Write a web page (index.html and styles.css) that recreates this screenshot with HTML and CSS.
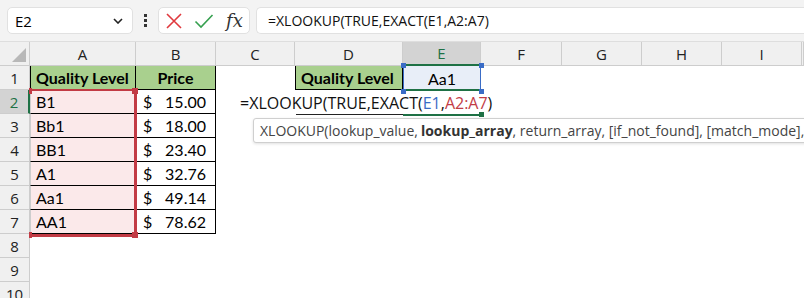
FILE: index.html
```html
<!DOCTYPE html>
<html lang="en">
<head>
  <meta charset="UTF-8" />
  <title>XLOOKUP EXACT</title>
  <link rel="stylesheet" href="styles.css">
</head>
<body>

  <div class="toolbar">
    <div class="name-box">
      <span>E2</span>
      <svg width="10" height="6" viewBox="0 0 10 6"><path d="M1 1l4 4 4-4" fill="none" stroke="#222" stroke-width="1.6"/></svg>
    </div>
    <div class="dots"><i></i><i></i><i></i></div>
    <div class="fx-box">
      <svg width="18" height="18" viewBox="0 0 18 18"><path d="M2 2l14 14M16 2L2 16" stroke="#e0393e" stroke-width="1.6"/></svg>
      <svg width="20" height="18" viewBox="0 0 20 18"><path d="M1.5 9.5l5.5 5.5L18.5 3" fill="none" stroke="#36a04f" stroke-width="1.6"/></svg>
      <span class="fx">fx</span>
    </div>
    <div class="formula">=XLOOKUP(TRUE,EXACT(E1,A2:A7)</div>
  </div>

  <div class="sheet">
    <div class="row head">
      <div class="corner"><svg width="14" height="14" viewBox="0 0 14 14"><path d="M14 0v14H0z" fill="#b8b8b8"/></svg></div>
      <div>A</div><div>B</div><div>C</div><div>D</div><div class="active">E</div><div>F</div><div>G</div><div>H</div><div>I</div><div></div>
    </div>
    <div class="row">
      <div class="num">1</div>
      <div class="cell hdr bl">Quality Level</div>
      <div class="cell hdr center">Price</div>
      <div></div>
      <div class="cell hdr bl">Quality Level</div>
      <div class="cell center ref">Aa1</div>
      <div></div><div></div><div></div><div></div><div></div>
    </div>
    <div class="row">
      <div class="num active">2</div>
      <div class="cell pink bl">B1</div>
      <div class="cell money"><span>$</span><span>15.00</span></div>
      <div></div><div></div><div></div><div></div><div></div><div></div><div></div><div></div>
    </div>
    <div class="row">
      <div class="num">3</div>
      <div class="cell pink bl">Bb1</div>
      <div class="cell money"><span>$</span><span>18.00</span></div>
      <div></div><div></div><div></div><div></div><div></div><div></div><div></div><div></div>
    </div>
    <div class="row">
      <div class="num">4</div>
      <div class="cell pink bl">BB1</div>
      <div class="cell money"><span>$</span><span>23.40</span></div>
      <div></div><div></div><div></div><div></div><div></div><div></div><div></div><div></div>
    </div>
    <div class="row">
      <div class="num">5</div>
      <div class="cell pink bl">A1</div>
      <div class="cell money"><span>$</span><span>32.76</span></div>
      <div></div><div></div><div></div><div></div><div></div><div></div><div></div><div></div>
    </div>
    <div class="row">
      <div class="num">6</div>
      <div class="cell pink bl">Aa1</div>
      <div class="cell money"><span>$</span><span>49.14</span></div>
      <div></div><div></div><div></div><div></div><div></div><div></div><div></div><div></div>
    </div>
    <div class="row">
      <div class="num">7</div>
      <div class="cell pink bl">AA1</div>
      <div class="cell money"><span>$</span><span>78.62</span></div>
      <div></div><div></div><div></div><div></div><div></div><div></div><div></div><div></div>
    </div>
    <div class="row"><div class="num">8</div></div>
    <div class="row"><div class="num">9</div></div>
    <div class="row short"><div class="num">10</div></div>

    <!-- reference highlights and edit overlay -->
    <div class="range-red"><i class="h tl"></i><i class="h tr"></i><i class="h bl2"></i><i class="h br"></i></div>
    <div class="range-blue"><i class="h tl"></i><i class="h tr"></i><i class="h bl2"></i><i class="h br"></i></div>
    <div class="active-top"></div>
    <div class="edit">=XLOOKUP(TRUE,EXACT(<span class="c-blue">E1</span>,<span class="c-red">A2:A7</span>)</div>
    <div class="edit-line"></div>
    <div class="active-bottom"><i></i></div>
    <div class="tip">XLOOKUP(lookup_value, <b>lookup_array</b>, return_array, [if_not_found], [match_mode],</div>
  </div>

</body>
</html>
```

FILE: styles.css
```css
:root {
  --bar: #f3f3f3;
  --head: #f0f0f0;
  --line: #cdcdcd;
  --green: #1e7145;
  --fill: #a9d08e;
  --pink: #fbe9ea;
  --red: #c23b45;
  --blue: #3a6cc6;
}

body {
  margin: 0;
  width: 804px;
  height: 300px;
  overflow: hidden;
  background: #fff;
  font-family: 'Liberation Sans', Arial, sans-serif;
  color: #000;
}

.toolbar {
  background: var(--bar);
  height: 42px;
  box-sizing: border-box;
  padding: 7px 0 7px 7px;
  display: flex;
  align-items: stretch;
  border-bottom: 1px solid #dedede;
}

.name-box {
  width: 126px;
  background: #fff;
  border: 1px solid #e1e1e1;
  border-radius: 5px;
  box-sizing: border-box;
  display: flex;
  align-items: center;
  justify-content: space-between;
  padding: 0 9px 0 7px;
  font-family: 'Open Sans', sans-serif;
  font-size: 15px;
}

.dots {
  width: 25px;
  display: flex;
  flex-direction: column;
  align-items: center;
  justify-content: center;
  gap: 2px;
}

.dots i {
  width: 3px;
  height: 3px;
  background: #333;
}

.fx-box {
  width: 92px;
  background: #fff;
  border: 1px solid #e1e1e1;
  border-radius: 5px;
  box-sizing: border-box;
  display: flex;
  align-items: center;
  gap: 11px;
  padding-left: 6px;
}

.fx {
  font-family: 'DejaVu Serif', serif;
  font-style: italic;
  font-size: 18px;
  color: #333;
  margin-left: 1px;
}

.formula {
  flex: 1;
  margin-left: 6px;
  background: #fff;
  border-top: 1px solid #e1e1e1;
  border-bottom: 1px solid #e1e1e1;
  border-left: 1px solid #e1e1e1;
  border-radius: 5px 0 0 5px;
  display: flex;
  align-items: center;
  padding-left: 11px;
  font-family: 'Open Sans', sans-serif;
  font-size: 14px;
  color: #111;
}

.sheet {
  position: relative;
}

.row {
  display: grid;
  grid-template-columns: 30px 106px 80px 79px 108px 78px 81px 80px 80px 80px 2px;
  height: 24px;
}

.row.short {
  height: 16px;
  overflow: hidden;
}

.row > div {
  box-sizing: border-box;
}

.head > div {
  background: var(--head);
  border-right: 1px solid var(--line);
  border-bottom: 1px solid var(--line);
  display: flex;
  align-items: center;
  justify-content: center;
  font-family: 'Open Sans', sans-serif;
  font-size: 15px;
  color: #222;
}

.head .corner {
  justify-content: flex-end;
  align-items: flex-end;
  padding: 0 3px 3px 0;
}

.head .active {
  background: #d3d3d3;
  color: var(--green);
  border-bottom: 2px solid var(--green);
}

.num {
  background: var(--head);
  border-right: 1px solid var(--line);
  border-bottom: 1px solid var(--line);
  display: flex;
  align-items: center;
  justify-content: center;
  height: 24px;
  font-family: 'Open Sans', sans-serif;
  font-size: 15px;
  color: #222;
}

.num.active {
  background: #d3d3d3;
  color: var(--green);
  border-right: 2px solid var(--green);
}

.cell {
  display: flex;
  align-items: center;
  padding: 0 5px;
  font-family: Lato, sans-serif;
  font-size: 16px;
  border-right: 1px solid #000;
  border-bottom: 1px solid #000;
  white-space: nowrap;
}

.cell.bl {
  border-left: 1px solid #000;
}

.cell.hdr {
  background: var(--fill);
  font-weight: bold;
}

.cell.center {
  justify-content: center;
}

.cell.pink {
  background: var(--pink);
  border-left-color: var(--line);
}

.cell.ref {
  background: #e8eef8;
  border: none;
}

.cell.money {
  justify-content: space-between;
  padding: 0 9px 0 7px;
}

.range-red {
  position: absolute;
  left: 30px;
  top: 47px;
  width: 107px;
  height: 148px;
  box-sizing: border-box;
  border-top: 2px solid var(--red);
  border-right: 3px solid var(--red);
  border-bottom: 3px solid var(--red);
}

.range-blue {
  position: absolute;
  left: 403px;
  top: 24px;
  width: 78px;
  height: 24px;
  box-sizing: border-box;
  border-left: 1px solid var(--blue);
  border-right: 1px solid var(--blue);
  z-index: 2;
}

.h {
  position: absolute;
  width: 6px;
  height: 6px;
  background: var(--red);
}

.range-blue .h {
  width: 5px;
  height: 5px;
  background: var(--blue);
}

.h.tl { left: -1px; top: -3px; width: 3px; }
.h.tr { right: -4px; top: -3px; }
.h.bl2 { left: -1px; bottom: -4px; width: 3px; }
.h.br { right: -4px; bottom: -4px; }

.range-blue .h.tl, .range-blue .h.bl2 { left: -3px; width: 5px; }

.active-top {
  position: absolute;
  left: 405px;
  top: 47px;
  width: 74px;
  height: 2px;
  background: var(--green);
  z-index: 1;
}

.edit {
  position: absolute;
  left: 240px;
  top: 49px;
  height: 23px;
  display: flex;
  align-items: center;
  padding-right: 2px;
  background: #fff;
  font-family: 'Open Sans', sans-serif;
  font-size: 16px;
  color: #111;
  white-space: nowrap;
}

.c-blue { color: var(--blue); }
.c-red { color: var(--red); }

.edit-line {
  position: absolute;
  left: 296px;
  top: 72px;
  width: 107px;
  height: 1px;
  background: #222;
}

.active-bottom {
  position: absolute;
  left: 403px;
  top: 72px;
  width: 78px;
  height: 2px;
  background: var(--green);
}

.active-bottom i {
  position: absolute;
  right: -3px;
  top: -2px;
  width: 5px;
  height: 5px;
  background: var(--green);
}

.tip {
  position: absolute;
  left: 253px;
  top: 76px;
  width: 560px;
  height: 25px;
  box-sizing: border-box;
  background: #fff;
  border: 1px solid #cfcfcf;
  border-radius: 3px;
  box-shadow: 0 1px 3px rgba(0, 0, 0, 0.12);
  padding-left: 6px;
  display: flex;
  align-items: center;
  font-family: 'Open Sans', sans-serif;
  font-size: 14px;
  color: #444;
  white-space: nowrap;
}

.tip b {
  color: #333;
  margin-left: 3px;
}
```
